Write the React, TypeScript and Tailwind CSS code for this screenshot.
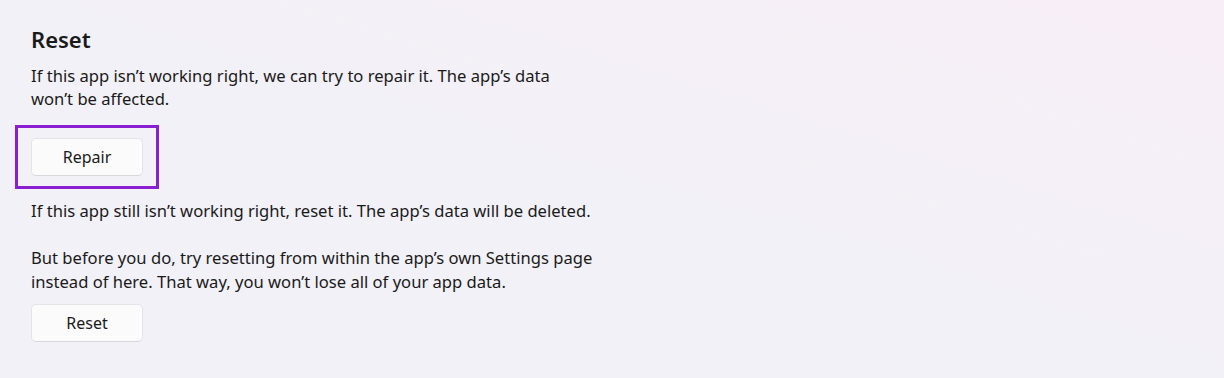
export default function App() {
  const font = { fontFamily: '"Noto Sans", "Open Sans", sans-serif' };
  return (
    <div
      className="w-[1224px] h-[378px] overflow-hidden bg-gradient-to-tr from-[#f1f1f7] via-[#f2f1f7] to-[#f8eef7] text-[#1a1a1a]"
      style={font}
    >
      <div className="pl-[31px] pt-[25px]">
        <h2 className="text-[22px] leading-[28px] font-semibold">Reset</h2>
        <p className="mt-[11px] text-[16.6px] leading-[23px] w-[563px]">
          If this app isn’t working right, we can try to repair it. The app’s data won’t be affected.
        </p>

        {/* highlighted repair button */}
        <div className="mt-[15px] ml-[-16px] w-fit border-[3px] border-[#8a1fd2] px-[13px] py-[10px]">
          <button className="w-[112px] h-[38px] rounded-[5px] bg-[#fbfbfc] border border-[#e4e4e8] border-b-[#d6d6db] text-[16px]">
            Repair
          </button>
        </div>

        <p className="mt-[10px] text-[16.6px] leading-[24px]">
          If this app still isn’t working right, reset it. The app’s data will be deleted.
        </p>
        <p className="mt-[23px] text-[16.6px] leading-[24px] w-[563px]">
          But before you do, try resetting from within the app’s own Settings page instead of here. That way, you won’t lose all of your app data.
        </p>
        <button className="mt-[10px] w-[112px] h-[38px] rounded-[5px] bg-[#fbfbfc] border border-[#e4e4e8] border-b-[#d6d6db] text-[16px]">
          Reset
        </button>
      </div>
    </div>
  );
}
